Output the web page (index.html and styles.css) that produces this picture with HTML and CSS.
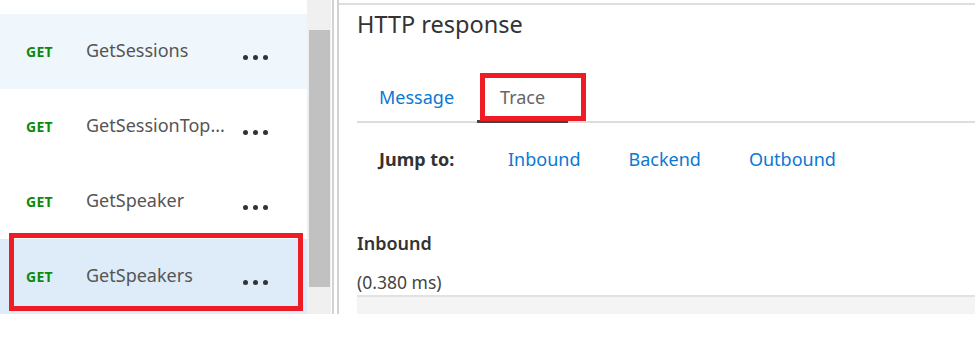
FILE: index.html
```html
<!DOCTYPE html>
<html lang="en">
<head>
<meta charset="utf-8">
<title>HTTP response trace</title>
<link rel="stylesheet" href="styles.css">
</head>
<body>
<div class="app">
  <aside class="sidebar">
    <ul class="ops">
      <li class="op op-hover"><span class="verb">GET</span><span class="name">GetSessions</span><span class="more"><i></i><i></i><i></i></span></li>
      <li class="op"><span class="verb">GET</span><span class="name">GetSessionTop...</span><span class="more"><i></i><i></i><i></i></span></li>
      <li class="op"><span class="verb">GET</span><span class="name">GetSpeaker</span><span class="more"><i></i><i></i><i></i></span></li>
      <li class="op op-selected"><span class="verb">GET</span><span class="name">GetSpeakers</span><span class="more"><i></i><i></i><i></i></span><span class="callout callout-row"></span></li>
    </ul>
    <div class="scrollbar"><div class="thumb"></div></div>
  </aside>
  <div class="divider"></div>
  <main class="detail">
    <h1 class="title">HTTP response</h1>
    <nav class="tabs">
      <a class="tab">Message</a>
      <a class="tab tab-active">Trace<span class="callout callout-tab"></span></a>
    </nav>
    <div class="jump">
      <span class="jump-label">Jump to:</span>
      <a class="jump-link">Inbound</a>
      <a class="jump-link">Backend</a>
      <a class="jump-link">Outbound</a>
    </div>
    <h2 class="section">Inbound</h2>
    <div class="timing">(0.380 ms)</div>
    <div class="trace-box"></div>
  </main>
</div>
</body>
</html>
```

FILE: styles.css
```css
* { box-sizing: border-box; }
html, body { margin: 0; padding: 0; background: #fff; }
body {
  font-family: "Noto Sans", "Open Sans", sans-serif;
  color: #333;
  overflow: hidden;
}
.app {
  display: flex;
  height: 314px;
  overflow: hidden;
}
.sidebar {
  display: flex;
  flex: 0 0 331px;
}
.ops {
  list-style: none;
  margin: 0;
  padding: 14px 0 0;
  width: 307px;
}
.op {
  position: relative;
  display: flex;
  align-items: center;
  height: 75px;
  padding-left: 26px;
}
.op-hover { background: #eff6fc; }
.op-selected { background: #deecf9; }
.verb {
  width: 60px;
  font-size: 14px;
  font-weight: 700;
  color: #0b8a0b;
  letter-spacing: 0.3px;
}
.name {
  width: 157px;
  font-size: 18px;
  color: #555;
  white-space: nowrap;
  margin-top: -4px;
}
.more {
  display: flex;
  gap: 5px;
  margin-top: 12px;
}
.more i {
  width: 5px;
  height: 5px;
  border-radius: 50%;
  background: #333;
}
.callout {
  position: absolute;
  border: 5px solid #ee1c25;
}
.callout-row {
  left: 9px;
  top: -6px;
  width: 294px;
  height: 78px;
}
.scrollbar {
  width: 24px;
  background: #f0f0f0;
  padding: 30px 1px 0 2px;
}
.thumb {
  height: 257px;
  background: #c1c1c1;
}
.divider {
  flex: 0 0 7px;
  margin-left: 1px;
  border-left: 2px solid #d2d2d2;
  border-right: 2px solid #d2d2d2;
}
.detail {
  flex: 1;
  min-width: 0;
  margin-top: 3px;
  border-top: 2px solid #dedede;
  padding-left: 18px;
}
.title {
  margin: 0;
  height: 68px;
  padding-top: 3px;
  font-size: 23.5px;
  font-weight: 400;
  line-height: 32px;
  color: #333;
}
.tabs {
  display: flex;
  border-bottom: 2px solid #dddddd;
}
.tab {
  position: relative;
  padding: 0 23px 0 22px;
  height: 50px;
  margin-bottom: -2px;
  display: flex;
  align-items: center;
  font-size: 18px;
  color: #0a78d4;
  border-bottom: 3px solid transparent;
}
.tab-active {
  color: #666;
  padding-left: 23px;
  border-bottom-color: #444;
}
.callout-tab {
  left: 3px;
  top: 0;
  width: 106px;
  height: 48px;
}
.jump {
  display: flex;
  align-items: center;
  gap: 48px;
  height: 72px;
  padding-left: 22px;
  font-size: 18px;
}
.jump-label { font-weight: 700; color: #333; width: 81px; white-space: nowrap; }
.jump-link { color: #0a78d4; }
.section {
  margin: 0;
  height: 76px;
  display: flex;
  align-items: flex-end;
  padding-bottom: 16px;
  font-size: 18px;
  font-weight: 600;
  color: #333;
}
.timing {
  font-size: 17.5px;
  color: #444;
  height: 26px;
  line-height: 26px;
  margin-top: -2px;
}
.trace-box {
  height: 40px;
  border-top: 2px solid #e2e2e2;
  background: #f4f4f4;
}
```
